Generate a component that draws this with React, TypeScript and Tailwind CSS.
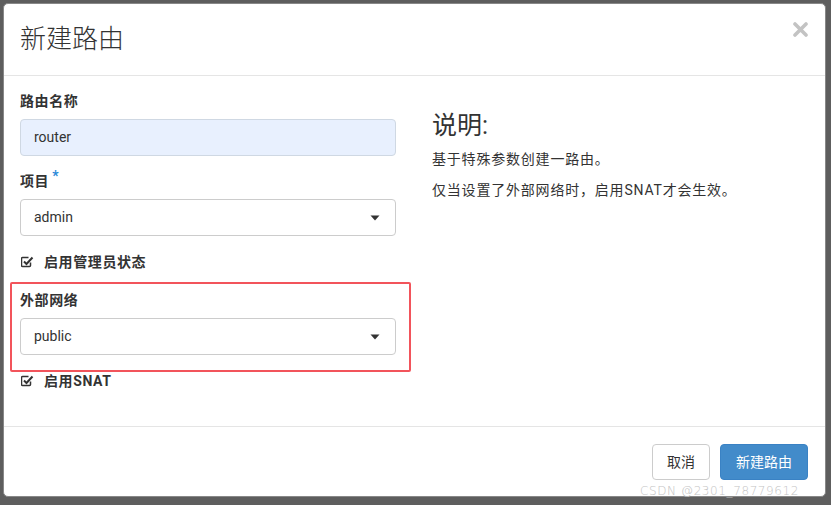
import React from "react";

const font = { fontFamily: 'Roboto, "Noto Sans CJK SC", sans-serif' };

const Caret = () => (
  <svg width="10" height="6" viewBox="0 0 10 6" className="text-[#333]">
    <path d="M0.5 0.5h9L5 5.5z" fill="currentColor" />
  </svg>
);

const CheckIcon = () => (
  <svg width="13" height="12" viewBox="0 0 13 12" fill="none" stroke="#333" strokeWidth="1.5">
    <path d="M9.5 6.5v3a1 1 0 0 1-1 1h-7a1 1 0 0 1-1-1v-7a1 1 0 0 1 1-1h6" />
    <path d="M3 5.5l2.5 2.5 6-6.5" strokeWidth="2" />
  </svg>
);

const Select = ({ value }: { value: string }) => (
  <div className="mt-2 h-[37px] flex items-center justify-between rounded-[4px] border border-[#cccccc] bg-white pl-[13px] pr-[15px] text-[14px] text-[#333]">
    <span>{value}</span>
    <Caret />
  </div>
);

const Check = ({ label }: { label: string }) => (
  <div className="flex items-center h-5 pl-[1px] text-[14px] font-bold text-[#333] tracking-[0.6px]">
    <CheckIcon />
    <span className="ml-[10px]">{label}</span>
  </div>
);

export default function App() {
  return (
    <div className="w-[831px] h-[505px] bg-[#5e5e5e] pt-[3px] pl-[3px] pr-[5px] pb-[8px]" style={font}>
      <div className="relative h-full bg-white rounded-[5px] border border-[#888] flex flex-col">
        {/* header */}
        <div className="h-[72px] flex items-center justify-between border-b border-[#e5e5e5] pl-[16px] pr-[17px]">
          <h1 className="text-[26px] font-light text-[#333]">新建路由</h1>
          <svg width="15" height="15" viewBox="0 0 15 15" className="-mt-[20px]">
            <path d="M2 2l11 11M13 2L2 13" stroke="#c3c3c3" strokeWidth="3.6" strokeLinecap="round" />
          </svg>
        </div>

        {/* body */}
        <div className="flex-1 flex pl-[16px] border-b border-[#e5e5e5]">
          <div className="relative w-[376px] pt-[15px]">
            <label className="block h-5 leading-5 text-[14px] font-bold text-[#333] tracking-[0.6px]">路由名称</label>
            <div className="mt-2 h-[37px] flex items-center rounded-[4px] border border-[#cfd8e3] bg-[#e8f0fe] pl-[13px] text-[14px] text-[#333]">
              router
            </div>

            <label className="mt-[15px] block h-5 leading-5 text-[14px] font-bold text-[#333] tracking-[0.6px]">
              项目<span className="relative -top-[5px] ml-[3px] text-[#2b88d8]">*</span>
            </label>
            <Select value="admin" />

            <div className="mt-[16px]">
              <Check label="启用管理员状态" />
            </div>

            <label className="mt-[18px] block h-5 leading-5 text-[14px] font-bold text-[#333] tracking-[0.6px]">外部网络</label>
            <Select value="public" />

            <div className="mt-[16px]">
              <Check label="启用SNAT" />
            </div>

            {/* annotation box */}
            <div className="absolute left-[-10px] top-[206px] w-[401px] h-[90px] border-2 border-[#f2545b] rounded-[2px] pointer-events-none" />
          </div>

          <div className="ml-[36px] pt-[34px] text-[#333]">
            <h2 className="h-8 leading-8 text-[25px] font-normal">说明:</h2>
            <p className="mt-[7px] h-5 leading-5 text-[14px] tracking-[0.8px]">基于特殊参数创建一路由。</p>
            <p className="mt-[11px] h-5 leading-5 text-[14px] tracking-[0.8px]">仅当设置了外部网络时，启用SNAT才会生效。</p>
          </div>
        </div>

        {/* footer */}
        <div className="h-[69px] flex justify-end gap-[10px] pt-[17px] pr-[17px]">
          <button className="h-[36px] w-[58px] rounded-[4px] border border-[#cccccc] bg-white text-[14px] text-[#333]">取消</button>
          <button className="h-[36px] w-[88px] rounded-[4px] border border-[#3a82c4] bg-[#428bca] text-[14px] text-white">新建路由</button>
        </div>

        <div className="absolute left-[636px] top-[478px] text-[#c4c4c4] font-light tracking-[0.6px] whitespace-nowrap" style={{ fontFamily: '"DejaVu Sans", sans-serif', fontSize: 12 }}>
          CSDN @2301_78779612
        </div>
      </div>
    </div>
  );
}
